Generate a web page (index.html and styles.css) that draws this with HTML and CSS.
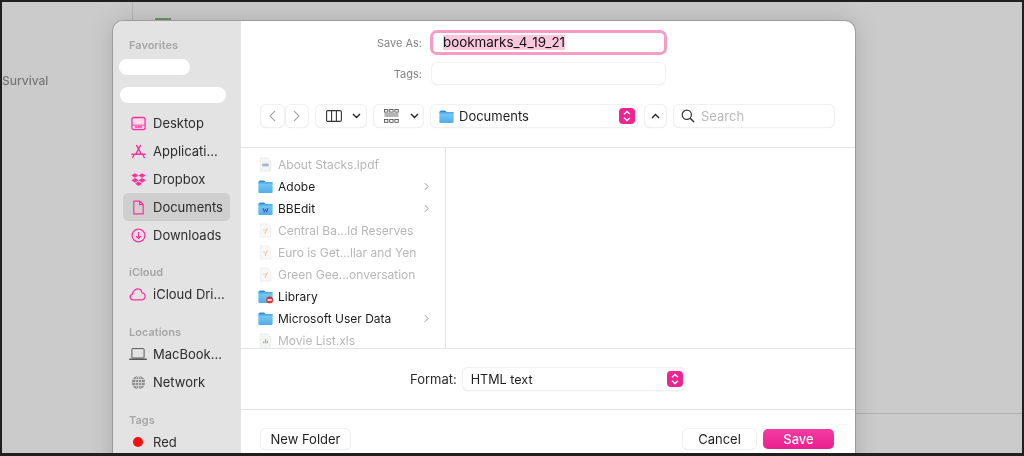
FILE: index.html
```html
<!DOCTYPE html>
<html lang="en">
<head>
<meta charset="utf-8">
<title>Save dialog</title>
<link rel="stylesheet" href="styles.css">
</head>
<body>
<svg class="defs" width="0" height="0" aria-hidden="true">
  <defs>
    <linearGradient id="fb" x1="0" y1="0" x2="0" y2="1"><stop offset="0" stop-color="#7accf6"/><stop offset="1" stop-color="#52ade6"/></linearGradient>
    <symbol id="folder" viewBox="0 0 16 15">
      <path d="M.6 3.2C.6 2 1.3 1.2 2.4 1.2h3.7c.6 0 1 .2 1.3.6l1 1.4H.6z" fill="#2a8fd6"/>
      <rect x="0.4" y="3" width="15.2" height="11.4" rx="1.4" fill="url(#fb)"/>
      <rect x="0.4" y="3" width="15.2" height="1.2" fill="#3a9de0"/>
    </symbol>
    <symbol id="doc" viewBox="0 0 16 16">
      <path d="M2.400 1h8l3.200 3.200V15H2.400z" fill="#f7f7f7" stroke="#ececec" stroke-width=".8"/>
      <path d="M7.400 11.400L10 5.600" stroke="#e8bd80" stroke-width="1" fill="none"/>
      <path d="M5.400 7.600h2.800" stroke="#dfd0b4" stroke-width="1" fill="none"/>
    </symbol>
    <symbol id="chev" viewBox="0 0 6 10"><path d="M1 1l4 4-4 4" fill="none" stroke="#9a9a9a" stroke-width="1.200"/></symbol>
    <symbol id="updown" viewBox="0 0 16 16">
      <rect width="16" height="16" rx="4" fill="#ee2492"/>
      <path d="M5 6.200L8 3.400l3 2.800M5 9.800l3 2.800 3-2.800" fill="none" stroke="#fff" stroke-width="1.400"/>
    </symbol>
  </defs>
</svg>
<div class="screen">
  <span class="bg-text">Survival</span>
  <span class="bg-vline"></span>
  <span class="bg-green"></span>
  <span class="bg-hline"></span>
  <div class="dialog">
    <aside class="sidebar">
      <div class="group-label">Favorites</div>
      <div class="item"><span class="blob blob-short"></span></div>
      <div class="item"><span class="blob blob-long"></span></div>
      <div class="item">
        <svg class="ico" viewBox="0 0 16 16"><rect x="1" y="1.600" width="14" height="12.800" rx="2" fill="#ffdcec"/><path d="M1.400 10h13.200V12.600a1.400 1.400 0 0 1-1.400 1.400H2.800a1.400 1.400 0 0 1-1.400-1.400z" fill="#fff"/><path d="M1.400 9.800h13.200" stroke="#ff2f9d" stroke-width="1"/><path d="M4 11.800h8" stroke="#ff2f9d" stroke-width="1.600"/><rect x="1" y="1.600" width="14" height="12.800" rx="2" fill="none" stroke="#ff2f9d" stroke-width="1.400"/></svg>
        <span>Desktop</span>
      </div>
      <div class="item">
        <svg class="ico" viewBox="0 0 16 16"><path d="M6 1.500l5 9.500M10 1.500L5 11M1 11h14M3.400 11l-1.500 3.400M12.600 11l1.500 3.400" fill="none" stroke="#ff2f9d" stroke-width="1.500" stroke-linecap="round"/></svg>
        <span>Applicati...</span>
      </div>
      <div class="item">
        <svg class="ico" viewBox="0 0 16 16"><path d="M4.200 1.200L8 3.700 4.200 6.200.4 3.700zM11.800 1.200L15.600 3.700 11.800 6.200 8 3.700zM4.200 6.400L8 8.900l-3.800 2.500L.4 8.900zM11.800 6.400l3.800 2.500-3.800 2.500L8 8.900zM4.400 12.500L8 10.100l3.600 2.400L8 15z" fill="#ff2f9d"/></svg>
        <span>Dropbox</span>
      </div>
      <div class="item item-selected">
        <svg class="ico" viewBox="0 0 16 16"><path d="M3 1.200h6.400L13 4.800v10H3z M9.200 1.400v3.600H13" fill="none" stroke="#ff2f9d" stroke-width="1.300" stroke-linejoin="round"/></svg>
        <span>Documents</span>
      </div>
      <div class="item">
        <svg class="ico" viewBox="0 0 16 16"><circle cx="8" cy="8" r="6.800" fill="none" stroke="#ff2f9d" stroke-width="1.300"/><path d="M8 4.200v7M5.400 8.600L8 11.200l2.600-2.600" fill="none" stroke="#ff2f9d" stroke-width="1.300"/></svg>
        <span>Downloads</span>
      </div>
      <div class="group-label gap-icloud">iCloud</div>
      <div class="item">
        <svg class="ico ico-wide" viewBox="0 0 18 14"><path d="M4.400 12.800C.4 12.800.2 8 3.200 7.400 4 3.400 7.400 1.200 10 2c2 .6 2.800 2.200 3 3.800 4 .2 4.200 7 .2 7z" fill="none" stroke="#ff2f9d" stroke-width="1.200"/></svg>
        <span>iCloud Dri...</span>
      </div>
      <div class="group-label gap-locations">Locations</div>
      <div class="item">
        <svg class="ico ico-wide" viewBox="0 0 18 14"><rect x="2.900" y="1.600" width="12.200" height="9.400" rx=".8" fill="none" stroke="#555" stroke-width="1"/><path d="M.2 12.200h17.600" stroke="#555" stroke-width="1.400"/></svg>
        <span>MacBook...</span>
      </div>
      <div class="item">
        <svg class="ico" viewBox="0 0 16 16"><circle cx="8" cy="8" r="7" fill="#8c8c8c"/><g fill="none" stroke="#e3e3e3" stroke-width=".8"><ellipse cx="8" cy="8" rx="3.200" ry="6.800"/><path d="M2 4.800h12M2 11.200h12M1 8h14M8 1v14"/></g></svg>
        <span>Network</span>
      </div>
      <div class="group-label gap-tags">Tags</div>
      <div class="item">
        <span class="tag-dot"></span>
        <span>Red</span>
      </div>
    </aside>
    <main class="main">
      <div class="form">
        <label class="form-label">Save As:</label>
        <div class="name-field"><span class="selected-text">bookmarks_4_19_21</span></div>
        <label class="form-label">Tags:</label>
        <div class="tags-field"></div>
      </div>
      <div class="toolbar">
        <div class="nav-pair">
          <span class="ctl nav-btn"><svg width="7" height="12" viewBox="0 0 7 12"><path d="M6 1L1 6l5 5" fill="none" stroke="#a8a8a8" stroke-width="1.100"/></svg></span>
          <span class="ctl nav-btn"><svg width="7" height="12" viewBox="0 0 7 12"><path d="M1 1l5 5-5 5" fill="none" stroke="#a8a8a8" stroke-width="1.100"/></svg></span>
        </div>
        <span class="ctl view-btn">
          <svg width="16" height="12" viewBox="0 0 16 12"><rect x=".6" y=".6" width="14.800" height="10.800" rx="1.400" fill="none" stroke="#333" stroke-width="1.100"/><path d="M5.600 1v10M10.400 1v10" stroke="#333" stroke-width="1.100"/></svg>
          <svg width="9" height="6" viewBox="0 0 9 6"><path d="M1 1l3.500 3.500L8 1" fill="none" stroke="#222" stroke-width="1.400"/></svg>
        </span>
        <span class="ctl group-btn">
          <svg width="15" height="14" viewBox="0 0 15 14"><g fill="none" stroke="#444" stroke-width=".8"><rect x=".5" y=".5" width="3.400" height="2.600"/><rect x="5.700" y=".5" width="3.400" height="2.600"/><rect x="10.900" y=".5" width="3.400" height="2.600"/><rect x=".5" y="10.500" width="3.400" height="2.800"/><rect x="5.700" y="10.500" width="3.400" height="2.800"/><rect x="10.900" y="10.500" width="3.400" height="2.800"/></g><path d="M.4 5h14M.4 7h14" stroke="#444" stroke-width=".8"/></svg>
          <svg width="9" height="6" viewBox="0 0 9 6"><path d="M1 1l3.500 3.500L8 1" fill="none" stroke="#222" stroke-width="1.400"/></svg>
        </span>
        <span class="ctl path-btn">
          <svg class="path-ico" viewBox="0 0 16 15"><use href="#folder"/></svg>
          <span class="grow path-text">Documents</span>
          <svg class="step" viewBox="0 0 16 16"><use href="#updown"/></svg>
        </span>
        <span class="ctl up-btn"><svg width="9" height="6" viewBox="0 0 9 6"><path d="M1 5l3.500-3.500L8 5" fill="none" stroke="#222" stroke-width="1.400"/></svg></span>
        <span class="ctl search">
          <svg width="14" height="14" viewBox="0 0 14 14"><circle cx="5.800" cy="5.800" r="4.600" fill="none" stroke="#333" stroke-width="1.200"/><path d="M9.200 9.200l3.800 3.800" stroke="#333" stroke-width="1.500"/></svg>
          <span>Search</span>
        </span>
      </div>
      <div class="browser">
        <div class="column">
          <div class="file off"><svg class="fico" viewBox="0 0 16 16"><path d="M2.400 1h8l3.200 3.200V15H2.400z" fill="#f5f5f5" stroke="#e8e8e8" stroke-width=".8"/><rect x="4.600" y="7" width="6.800" height="3" fill="#a9b6d0"/></svg><span>About Stacks.lpdf</span></div>
          <div class="file"><svg class="fico" viewBox="0 0 16 15"><use href="#folder"/></svg><span class="grow">Adobe</span><svg class="chev" viewBox="0 0 6 10"><use href="#chev"/></svg></div>
          <div class="file"><svg class="fico" viewBox="0 0 16 15"><use href="#folder"/><path d="M5.400 7l1.300 4.400L8 8l1.300 3.400L10.600 7" fill="none" stroke="#4b4bb0" stroke-width="1"/></svg><span class="grow">BBEdit</span><svg class="chev" viewBox="0 0 6 10"><use href="#chev"/></svg></div>
          <div class="file off"><svg class="fico" viewBox="0 0 16 16"><use href="#doc"/></svg><span>Central Ba...ld Reserves</span></div>
          <div class="file off"><svg class="fico" viewBox="0 0 16 16"><use href="#doc"/></svg><span>Euro is Get...llar and Yen</span></div>
          <div class="file off"><svg class="fico" viewBox="0 0 16 16"><use href="#doc"/></svg><span>Green Gee...onversation</span></div>
          <div class="file"><svg class="fico" viewBox="0 0 16 15"><use href="#folder"/><circle cx="12.400" cy="11.200" r="3.600" fill="#e0342c"/><path d="M10.200 11.200h4.400" stroke="#fff" stroke-width="1.400"/></svg><span class="grow">Library</span></div>
          <div class="file"><svg class="fico" viewBox="0 0 16 15"><use href="#folder"/></svg><span class="grow">Microsoft User Data</span><svg class="chev" viewBox="0 0 6 10"><use href="#chev"/></svg></div>
          <div class="file off"><svg class="fico" viewBox="0 0 16 16"><path d="M2.400 1h8l3.200 3.200V15H2.400z" fill="#f5f5f5" stroke="#e8e8e8" stroke-width=".8"/><path d="M6 11V9M8 11V6.600M10 11V8.400" stroke="#8fb98f" stroke-width="1.300"/></svg><span>Movie List.xls</span></div>
        </div>
        <div class="preview"></div>
      </div>
      <div class="format-row">
        <span class="format-label">Format:</span>
        <span class="ctl format-select"><span class="grow">HTML text</span><svg class="step" viewBox="0 0 16 16"><use href="#updown"/></svg></span>
      </div>
      <div class="footer">
        <span class="ctl btn btn-new">New Folder</span>
        <span class="grow"></span>
        <span class="ctl btn btn-cancel">Cancel</span>
        <span class="btn btn-save">Save</span>
      </div>
    </main>
  </div>
</div>
</body>
</html>
```

FILE: styles.css
```css
* { box-sizing: border-box; }
html, body { margin: 0; padding: 0; }
body { width: 1024px; height: 456px; overflow: hidden; font-family: Inter, "Liberation Sans", sans-serif; color: #1e1e1e; }
.defs { position: absolute; }
.screen { position: relative; width: 1024px; height: 456px; overflow: hidden; background: #cbcbcb; border: solid #1f1f1f; border-width: 2px 2px 3px 2px; filter: blur(.3px); }
.bg-text { position: absolute; left: 0; top: 71px; font-size: 12px; line-height: 16px; font-weight: 500; color: #777; }
.bg-vline { position: absolute; left: 130px; top: 0; width: 1px; height: 20px; background: #b4b4b4; }
.bg-green { position: absolute; left: 153px; top: 16px; width: 16px; height: 4px; background: #6f9270; }
.bg-hline { position: absolute; left: 853px; top: 411px; width: 170px; height: 1px; background: #b0b0b0; }
.dialog { position: absolute; left: 111px; top: 19px; width: 742px; height: 460px; display: flex; background: #fff; border-radius: 10px 10px 0 0; overflow: hidden; box-shadow: 0 0 0 1px #a9a9a9; }
.screen::after { content: ""; position: absolute; left: 111px; top: 19px; width: 742px; height: 460px; border-radius: 10px; box-shadow: 0 0 26px rgba(0,0,0,.16); pointer-events: none; }
.sidebar { flex: 0 0 128px; background: #e3e3e3; padding: 16px 11px 0 10px; }
.group-label { height: 16px; line-height: 16px; padding-left: 6px; font-size: 11px; font-weight: 600; color: #a6a6a6; }
.gap-icloud { margin-top: 15px; }
.gap-locations { margin-top: 16px; }
.gap-tags { margin-top: 16px; }
.item { height: 28px; display: flex; align-items: center; gap: 7px; padding-left: 8px; font-size: 13px; border-radius: 5px; color: #2c2c2c; }
.item-selected { background: #cfcfcf; }
.ico { flex: none; width: 15px; height: 15px; }
.ico-wide { width: 18px; height: 14px; margin: 0 -1px 0 -2px; }
.blob { display: block; height: 16px; background: #fff; border-radius: 8px; }
.blob-short { width: 71px; margin-left: -12px; }
.blob-long { width: 106px; margin-left: -11px; }
.tag-dot { flex: none; width: 10px; height: 10px; margin: 0 3px 0 2px; border-radius: 50%; background: #f80d0d; }
.main { flex: 1; min-width: 0; display: flex; flex-direction: column; }
.form { display: grid; grid-template-columns: 181px 235px; grid-template-rows: 24px 21px; row-gap: 9px; column-gap: 9px; padding-top: 9px; align-items: center; }
.form-label { text-align: right; font-size: 11px; color: #838383; padding-top: 1px; }
.name-field { width: 237px; height: 25px; margin-left: -1px; border: 3px solid #f89cc4; border-radius: 7px; padding-left: 10px; font-size: 13.4px; color: #111; display: flex; align-items: center; }
.selected-text { background: #fcc8de; line-height: 15px; }
.tags-field { width: 233px; height: 21px; margin-left: 1px; background: #fff; border-radius: 5px; box-shadow: 0 0 0 1px #f2f2f2, 0 1px 1px #dcdcdc; }
.toolbar { display: flex; align-items: center; gap: 8px; height: 22px; margin-top: 21px; padding-left: 20px; }
.ctl { display: flex; align-items: center; height: 22px; background: #fff; border-radius: 5px; box-shadow: 0 0 0 1px #f0f0f0, 0 1px 1px #d6d6d6; }
.nav-pair { display: flex; gap: 2px; }
.nav-btn { width: 22.5px; justify-content: center; }
.view-btn { width: 50px; padding: 0 5px 0 10px; justify-content: space-between; }
.group-btn { width: 49px; padding: 0 4px 0 10px; justify-content: space-between; }
.path-btn { width: 206px; padding: 0 2px 0 8px; gap: 5px; font-size: 13px; }
.path-text { padding-bottom: 1px; }
.path-ico { width: 15px; height: 15px; }
.step { flex: none; width: 16px; height: 16px; }
.grow { flex: 1; }
.up-btn { width: 21px; justify-content: center; }
.search { width: 160px; padding-left: 7px; gap: 6px; font-size: 13px; color: #b9b9b9; }
.browser { display: flex; height: 202px; margin-top: 20px; border-top: 1px solid #e4e4e4; border-bottom: 1px solid #e4e4e4; }
.column { flex: 0 0 205px; overflow: hidden; padding: 5px 0 0 17px; border-right: 1px solid #e4e4e4; }
.preview { flex: 1; }
.file { display: flex; align-items: center; height: 22px; gap: 5px; padding-right: 16px; font-size: 12px; color: #1c1c1c; }
.file.off { color: #b7b7b7; }
.fico { flex: none; width: 15px; height: 15px; }
.chev { flex: none; width: 5px; height: 9px; }
.format-row { display: flex; align-items: center; height: 61px; padding-left: 169px; gap: 6px; border-bottom: 1px solid #e4e4e4; }
.format-label { font-size: 13px; color: #2c2c2c; }
.format-select { width: 222px; padding: 0 2px 0 8px; font-size: 12.6px; }
.footer { display: flex; align-items: center; gap: 7px; padding: 19px 21px 0 20px; }
.btn { height: 20px; display: flex; align-items: center; justify-content: center; font-size: 13px; border-radius: 5px; }
.btn-new { width: 89px; }
.btn-cancel { width: 73px; }
.btn-save { width: 71px; background: linear-gradient(#f43ba3, #ec1f8f); color: #fff; font-weight: 500; }
```
